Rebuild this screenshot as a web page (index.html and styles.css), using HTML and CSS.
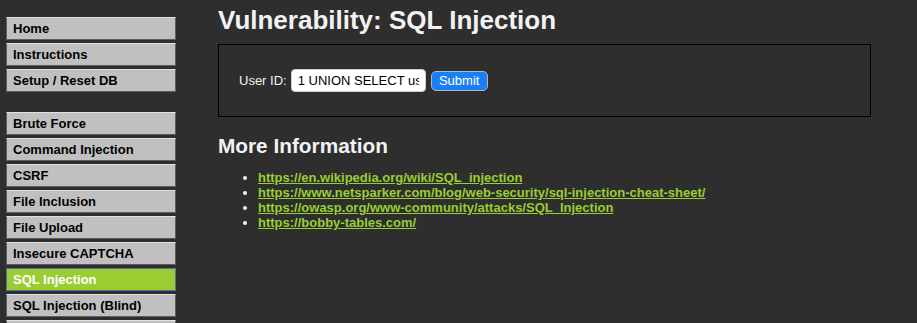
FILE: index.html
```html
<!DOCTYPE html>
<html>
<head>
<meta charset="utf-8">
<link rel="stylesheet" href="styles.css">
</head>
<body>
<div class="page">
  <nav class="menu">
    <ul class="group">
      <li>Home</li>
      <li>Instructions</li>
      <li>Setup / Reset DB</li>
    </ul>
    <ul class="group">
      <li>Brute Force</li>
      <li>Command Injection</li>
      <li>CSRF</li>
      <li>File Inclusion</li>
      <li>File Upload</li>
      <li>Insecure CAPTCHA</li>
      <li class="selected">SQL Injection</li>
      <li>SQL Injection (Blind)</li>
      <li>Weak Session IDs</li>
    </ul>
  </nav>
  <main class="body">
    <h1 class="title">Vulnerability: SQL Injection</h1>
    <div class="box">
      <form class="form">
        <label class="label">User ID:</label>
        <input class="input" type="text" value="1 UNION SELECT user, password FROM users#">
        <button class="submit" type="button">Submit</button>
      </form>
    </div>
    <h2 class="subtitle">More Information</h2>
    <ul class="links">
      <li><a href="#">https://en.wikipedia.org/wiki/SQL_injection</a></li>
      <li><a href="#">https://www.netsparker.com/blog/web-security/sql-injection-cheat-sheet/</a></li>
      <li><a href="#">https://owasp.org/www-community/attacks/SQL_Injection</a></li>
      <li><a href="#">https://bobby-tables.com/</a></li>
    </ul>
  </main>
</div>
</body>
</html>
```

FILE: styles.css
```css
html, body {
  margin: 0;
  padding: 0;
  background: #2e2e2e;
  font-family: "Liberation Sans", Arial, sans-serif;
  overflow: hidden;
}
.page {
  display: flex;
  padding: 17px 0 0 6px;
}
.menu {
  width: 170px;
  flex: none;
}
.group {
  list-style: none;
  margin: 0 0 20px 0;
  padding: 0;
}
.group li {
  box-sizing: border-box;
  height: 23px;
  margin-bottom: 3px;
  padding: 3px 0 0 6px;
  background: #c0c0c0;
  border: 1px solid #5d5d5d;
  border-top-color: #e0e0e0;
  color: #000;
  font-weight: bold;
  font-size: 13px;
  line-height: 15px;
}
.group li.selected {
  background: #9acd32;
  color: #fff;
  border-color: #5b6ea6;
}
.body {
  margin-left: 42px;
  width: 653px;
}
.title {
  margin: -13px 0 0 0;
  font-size: 26px;
  line-height: 32px;
  color: #f2f2f2;
  font-weight: bold;
}
.box {
  margin-top: 8px;
  height: 71px;
  border: 1px solid #000;
  display: flex;
  align-items: center;
}
.form {
  display: flex;
  align-items: center;
  margin: 0 0 0 20px;
}
.label {
  color: #f2f2f2;
  font-size: 13px;
  margin-right: 4px;
}
.input {
  box-sizing: border-box;
  width: 135px;
  height: 23px;
  border: 1px solid #ccc;
  border-radius: 4px;
  background: #fff;
  padding: 0 6px;
  font-family: "Liberation Sans", Arial, sans-serif;
  font-size: 13px;
  color: #000;
}
.submit {
  box-sizing: border-box;
  margin-left: 5px;
  height: 20px;
  width: 57px;
  border: 1px solid #aeb8c8;
  border-radius: 5px;
  background: #1a7ff4;
  color: #fff;
  font-family: "Liberation Sans", Arial, sans-serif;
  font-size: 13px;
  padding: 0;
}
.subtitle {
  margin: 16px 0 0 0;
  font-size: 20.8px;
  line-height: 26px;
  color: #f2f2f2;
  font-weight: bold;
}
.links {
  margin: 11px 0 0 0;
  padding-left: 40px;
  color: #f2f2f2;
  font-size: 13px;
  line-height: 15px;
}
.links a {
  color: #9acd32;
  font-weight: bold;
}
```
